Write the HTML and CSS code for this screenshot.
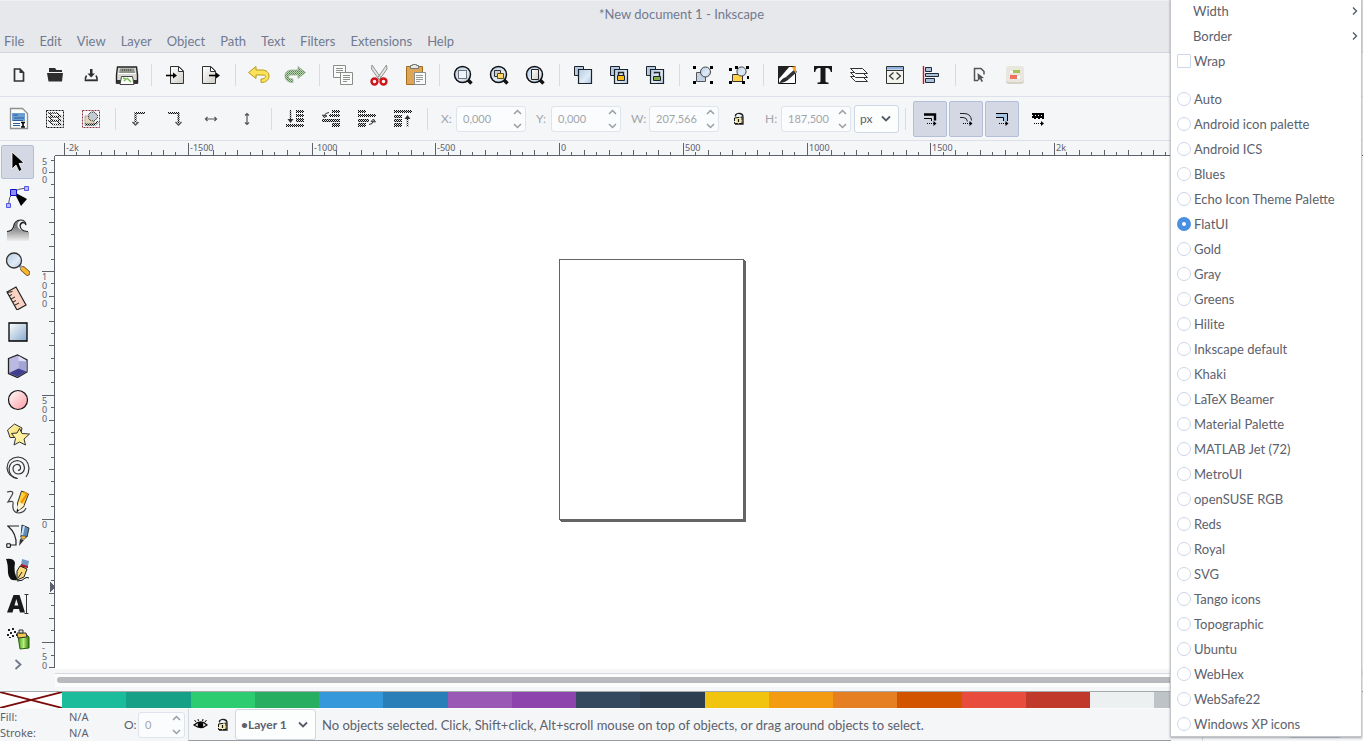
FILE: index.html
```html
<!DOCTYPE html>
<html lang="en">
<head>
<meta charset="utf-8">
<title>*New document 1 - Inkscape</title>
<link rel="stylesheet" href="styles.css">
</head>
<body>
<svg class="defs" aria-hidden="true">
  <defs>
    <pattern id="dk" width="2" height="2" patternUnits="userSpaceOnUse"><rect width="1" height="1" fill="#111"/><rect x="1" y="1" width="1" height="1" fill="#111"/><rect x="1" width="1" height="1" fill="#aaa"/></pattern>
    <pattern id="gr" width="2" height="2" patternUnits="userSpaceOnUse"><rect width="2" height="2" fill="#c3d6bc"/><rect width="1" height="1" fill="#4d7a45"/><rect x="1" y="1" width="1" height="1" fill="#6d9963"/></pattern>
    <linearGradient id="blue" x1="0" y1="0" x2="1" y2="1"><stop offset="0" stop-color="#fff"/><stop offset="1" stop-color="#86a9cc"/></linearGradient>
    <linearGradient id="sky" x1="0" y1="0" x2="1" y2="1"><stop offset="0" stop-color="#b4cbe4"/><stop offset=".6" stop-color="#e0ebf6"/><stop offset="1" stop-color="#a9c3de"/></linearGradient>
    <linearGradient id="pink" x1="0" y1="0" x2="1" y2="1"><stop offset="0" stop-color="#fff"/><stop offset="1" stop-color="#ff9aa2"/></linearGradient>
    <linearGradient id="gold" x1="0" y1="0" x2="1" y2="1"><stop offset="0" stop-color="#fff6c4"/><stop offset="1" stop-color="#f7d34a"/></linearGradient>
    <linearGradient id="paper" x1="0" y1="0" x2="1" y2="1"><stop offset="0" stop-color="#fff"/><stop offset="1" stop-color="#cfcdc6"/></linearGradient>
    <linearGradient id="grey" x1="0" y1="0" x2="0" y2="1"><stop offset=".3" stop-color="#777"/><stop offset="1" stop-color="#eee"/></linearGradient>
    <linearGradient id="green" x1="0" y1="0" x2="1" y2="0"><stop offset="0" stop-color="#3f9a12"/><stop offset=".5" stop-color="#b9ee7e"/><stop offset="1" stop-color="#2f7a0c"/></linearGradient>
    <g id="lens"><circle cx="11.500" cy="11.500" r="8" fill="url(#sky)" stroke="#111" stroke-width="1.500"/><path d="M17 17l3.500 3.500" stroke="#111" stroke-width="3.400"/></g>
    <g id="twosq" stroke="#1b222b"><path d="M3.500 3.500h9v9h-9z" fill="#b5cae0"/><path d="M7.500 6.500h13v14h-13z" fill="url(#sky)" stroke-width="1.200"/></g>
    <g id="corners" fill="#000"><path d="M2 3h3v3H2zM19 3h3v3h-3zM2 18h3v3H2zM19 18h3v3h-3z"/></g>
    <g id="up" fill="none" stroke="#9a9da3" stroke-width="1.500"><path d="M1 5l3.500-3.500L8 5M1 15l3.500 3.500L8 15"/></g>
    <path id="down" d="M1 1.500l4 4 4-4" fill="none" stroke="#555c69" stroke-width="1.800"/>
    <g id="lock"><path d="M8.500 9.500V8Q10 6 13 6.500t3 3.500v7h-8" fill="none" stroke="#222" stroke-width="1.300"/><path d="M7.500 11l7.500-1v6.500H7.500z" fill="#f7ecb0" stroke="#111" stroke-dasharray="5 1"/><path d="M11.500 12v3" stroke="#111" stroke-width="1.200"/></g>
  </defs>
</svg>

<header>
  <h1>*New document 1 - Inkscape</h1>
  <nav class="menubar">
    <button>File</button><button>Edit</button><button>View</button><button>Layer</button><button>Object</button><button>Path</button><button>Text</button><button>Filters</button><button>Extensions</button><button>Help</button>
  </nav>
</header>

<div class="toolbar">
  <button class="tb" aria-label="New"><svg viewBox="0 0 24 24"><path d="M7.500 6h5.500l3.500 3.500V18h-9z" fill="none" stroke="#333" stroke-width="1.700"/><path d="M12.500 5.500v4.500H17" fill="#333"/></svg></button>
  <button class="tb" aria-label="Open"><svg viewBox="0 0 24 24"><path d="M6 5h6l1.500 2H19v2H6zM4 10h16l-1 8.500H5.500z" fill="#2e2e2e"/></svg></button>
  <button class="tb" aria-label="Save"><svg viewBox="0 0 24 24"><path d="M11 6h2.500v4.500H16L12.200 14.500 8.500 10.500H11z" fill="#2e2e2e"/><path d="M7.500 12.500l-1 2.500v2.500h11.500V15l-1-2.500" fill="none" stroke="#2e2e2e" stroke-width="1.600"/><path d="M8 16.500h9" stroke="#777"/></svg></button>
  <button class="tb" aria-label="Print"><svg viewBox="0 0 24 24"><path d="M2.500 4h19l1 8v8h-21v-8z" fill="#d9dad2" stroke="#222" stroke-width="1.400"/><path d="M5 5.500h14l1 4.500H4z" fill="#8f958c"/><path d="M7 7h10" stroke="#333" stroke-dasharray="1 1"/><path d="M3 10.500h18" stroke="#fff"/><path d="M2 17h20v4H2z" fill="#333"/><path d="M6.500 13.500h11l1.500 8h-14z" fill="#fff" stroke="#444"/><path d="M8 15l3 1-2 2M12 15l4 4" stroke="#6cbf4a" stroke-width="1.500" fill="none"/></svg></button>
  <i class="sep"></i>
  <button class="tb" aria-label="Import"><svg viewBox="0 0 24 24"><path d="M7.500 3.500h8.500l4.500 4.500v12.500h-13z" fill="url(#paper)" stroke="#333"/><path d="M15.500 3.500V8.500h5z" fill="#fff" stroke="#333"/><path d="M3 12.500h8" stroke="#000" stroke-width="1.600"/><path d="M10 9.500l4 3-4 3z"/></svg></button>
  <button class="tb" aria-label="Export"><svg viewBox="0 0 24 24"><path d="M3.500 3.500h8.500l4.500 4.500v12.500h-13z" fill="url(#paper)" stroke="#333"/><path d="M11.500 3.500V8.500h5z" fill="#fff" stroke="#333"/><path d="M10 12.500h8" stroke="#000" stroke-width="1.600"/><path d="M17 9.500l4 3-4 3z"/></svg></button>
  <i class="sep"></i>
  <button class="tb" aria-label="Undo"><svg viewBox="0 0 24 24"><path d="M1.500 9.500L9 3.500v3.500h6c4 0 7 2 7 6 0 4-3 6.500-8 6.500v-3.500c3 0 4.500-1 4.500-2.500S17 12 14 12H9v3.500z" fill="#fbe25c" stroke="#b89a10"/></svg></button>
  <button class="tb" aria-label="Redo"><svg viewBox="0 0 24 24"><path d="M22.500 9.500L15 3.500v3.500H9c-4 0-7 2-7 6 0 4 3 6.500 8 6.500v-3.500c-3 0-4.500-1-4.500-2.500S7 12 10 12h5v3.500z" fill="url(#gr)" stroke="#93ab8d" stroke-width=".7"/></svg></button>
  <i class="sep"></i>
  <button class="tb" aria-label="Copy"><svg viewBox="0 0 24 24"><g fill="#fafafa" stroke="#8b8d89"><path d="M2.500 2.500h12v12h-12z"/><path d="M9.500 9.500h12v12h-12z"/></g><path d="M5 5.500h7M5 7.500h7M5 9.500h6M12 12.500h7M12 14.500h7M12 16.500h7M12 18.500h4" stroke="#8d8f8c"/></svg></button>
  <button class="tb" aria-label="Cut"><svg viewBox="0 0 24 24"><path d="M5 2l9 13-2 1.500L4.500 6zM19.500 2l-9 13 2 1.500L20 6z" fill="#e4e6e2" stroke="#858883" stroke-width=".9"/><circle cx="7.500" cy="18.500" r="3" fill="none" stroke="#d0151a" stroke-width="2.400"/><circle cx="16.500" cy="18.500" r="3" fill="none" stroke="#d0151a" stroke-width="2.400"/></svg></button>
  <button class="tb" aria-label="Paste"><svg viewBox="0 0 24 24"><path d="M3.500 3.500h16v18h-16z" fill="#dda555" stroke="#a36c1d"/><path d="M7.500 5.500v-3h2v-1h4v1h2v3z" fill="#e8e8e4" stroke="#777"/><path d="M11.500 9.500h11v12h-11z" fill="#fafafa" stroke="#8b8d89"/><path d="M13 12.500h7M13 14.500h7M13 16.500h7M13 18.500h4" stroke="#999"/></svg></button>
  <i class="sep"></i>
  <button class="tb" aria-label="Zoom selection"><svg viewBox="0 0 24 24"><use href="#lens"/><path d="M7.500 7.500h8v8h-8z" fill="#fff" fill-opacity=".6" stroke="#000" stroke-dasharray="1 1"/></svg></button>
  <button class="tb" aria-label="Zoom drawing"><svg viewBox="0 0 24 24"><use href="#lens"/><path d="M7.500 7.500h6v6h-6z" fill="#ccc" stroke="#333"/><path d="M10.500 10.500h6v5h-6z" fill="#ffdb70" stroke="#6b4a00"/></svg></button>
  <button class="tb" aria-label="Zoom page"><svg viewBox="0 0 24 24"><use href="#lens"/><path d="M8.500 6.500h7v10h-7z" fill="url(#paper)" stroke="#222"/></svg></button>
  <i class="sep"></i>
  <button class="tb" aria-label="Duplicate"><svg viewBox="0 0 24 24"><use href="#twosq"/></svg></button>
  <button class="tb" aria-label="Clone"><svg viewBox="0 0 24 24"><use href="#twosq"/><path d="M11.500 12v-2.500h5V12" fill="none" stroke="#222" stroke-width="1.400"/><path d="M10.500 12.500h7v5h-7z" fill="#fbb917" stroke="#222"/></svg></button>
  <button class="tb" aria-label="Unlink clone"><svg viewBox="0 0 24 24"><use href="#twosq"/><path d="M11.500 10.500v-1h5V13" fill="none" stroke="#222" stroke-width="1.400"/><path d="M10.500 13.500h7v4h-7z" fill="#7fae4b" stroke="#222"/></svg></button>
  <i class="sep"></i>
  <button class="tb" aria-label="Group"><svg viewBox="0 0 24 24"><path d="M5.500 9.500h9v9h-9z" fill="#c2d3e5" stroke="#555"/><circle cx="14.500" cy="9" r="5" fill="url(#sky)" stroke="#444"/><use href="#corners"/></svg></button>
  <button class="tb" aria-label="Ungroup"><svg viewBox="0 0 24 24"><path d="M5.500 11.500h10v7h-10z" fill="#ffd24a" stroke="#333"/><circle cx="14.500" cy="8.500" r="4.600" fill="url(#sky)" stroke="#444"/><path d="M2 5h3v3H2zM8 3h3v3H8zM19 3h3v3h-3zM2 18h3v3H2zM15 18h3v3h-3zM20 13h2v3h-2z"/></svg></button>
  <i class="sep"></i>
  <button class="tb" aria-label="Fill and stroke"><svg viewBox="0 0 24 24"><path d="M3.500 3.500h17v17h-17z" fill="#fff" stroke="#111"/><path d="M3 3h12L3 17z" fill="#222"/><path d="M20 6l2 3-8 7-3-2z" fill="#30343a"/><path d="M17 4l4-1v8z" fill="#f5a623"/><path d="M4 20q4-6 8-6l2 2q-4 4-10 4z" fill="#2a2a2a"/></svg></button>
  <button class="tb" aria-label="Text"><svg viewBox="0 0 24 24"><path d="M3 3h18v6h-1.200q-.8-4-3.800-4h-1.500v13q0 1.500 3 1.500V21H6.500v-1.500q3 0 3-1.500V5H8Q5 5 4.200 9H3z" fill="#181818"/></svg></button>
  <button class="tb" aria-label="Layers"><svg viewBox="0 0 24 24"><g fill="#fafafa" stroke="#333"><path d="M3.500 13.500h12l5 5h-12z"/><path d="M3.500 9.500h12l5 5h-12z"/><path d="M3.500 5.500h12l5 5h-12z"/></g></svg></button>
  <button class="tb" aria-label="XML editor"><svg viewBox="0 0 24 24"><path d="M3.500 3.500h17v17h-17z" fill="#f3f3ee" stroke="#333"/><path d="M4 4h16v2.500H4z" fill="#8fb4e3"/><path d="M4 7.500h16" stroke="#333"/><path d="M10.500 9.500L6.500 13l4 3.500M13.500 9.500l4 3.500-4 3.500" fill="none" stroke="#333" stroke-width="1.200"/></svg></button>
  <button class="tb" aria-label="Align"><svg viewBox="0 0 24 24"><path d="M4.500 3v18" stroke="#d0101a" stroke-width="1.400"/><g fill="#a9c3dc" stroke="#1f2a36"><path d="M6.500 4.500h6v4h-6zM6.500 10.500h13v3h-13zM6.500 15.500h9v4h-9z"/></g></svg></button>
  <i class="sep"></i>
  <button class="tb" aria-label="Preferences"><svg viewBox="0 0 24 24"><path d="M11 17.500H7.500V5.500h6.500l3 3v3" fill="none" stroke="#555" stroke-width="1.500"/><path d="M10.500 10l6.500 5-2.500.3 1.500 3-1.500.7-1.500-3-2 2z" fill="#555"/></svg></button>
  <button class="tb" aria-label="Document properties"><svg viewBox="0 0 24 24"><rect x="3" y="4" width="18" height="17" rx="3" fill="#d5d3c8"/><rect x="3" y="3" width="18" height="16" rx="3" fill="#e9e7dd"/><path d="M10 7h7v3h-7z" fill="#a3c556"/><path d="M7 12h7v4H7z" fill="#ed7465"/><path d="M7 8h3v2H7zM14 13h3v3h-3z" fill="#fff"/></svg></button>
</div>

<div class="toolbar options">
  <button class="tb" aria-label="Select all"><svg viewBox="0 0 24 24"><path d="M3.500 1.500h12l5 5v15h-17z" fill="#fbfbf8" stroke="#8d9290" stroke-width="1.300"/><path d="M5 6h13v8H5z" fill="#6c9fd4"/><path d="M6 8h5M7 11h10M6 13.500h10M6 16.500h7M6 18.500h7" stroke="#2c5d95"/><path d="M13 15h6v6h-6z" fill="#fff"/><path d="M14 15.500h4M14 20h4M16 16v4" stroke="#000" stroke-width="1.600"/></svg></button>
  <button class="tb" aria-label="Select all layers"><svg viewBox="0 0 24 24"><path d="M3.500 3.500h17v17h-17z" fill="none" stroke="#111" stroke-dasharray="2 1"/><g fill="#fff" stroke="url(#dk)" stroke-width="1.500"><path d="M6 14h8l4 3.500h-8zM6 10h8l4 3.500h-8zM6 6h8l4 3.500h-8z"/></g></svg></button>
  <button class="tb" aria-label="Deselect"><svg viewBox="0 0 24 24"><path d="M3.500 3.500h17v17h-17z" fill="none" stroke="#8c3540" stroke-dasharray="2 1"/><path d="M6 9h9v9H6z" fill="#e3d9ba" stroke="#aaa"/><circle cx="14" cy="9.500" r="4.500" fill="#c3cad3" stroke="url(#dk)"/><path d="M6 17.500h10l3-3" stroke="url(#dk)" fill="none" stroke-width="2"/></svg></button>
  <i class="sep"></i>
  <button class="tb" aria-label="Rotate left"><svg viewBox="0 0 24 24"><path d="M18 6H8.500v10" fill="none" stroke="url(#dk)" stroke-width="2"/><path d="M5.500 15l3 3 3-3" fill="none" stroke="#555" stroke-width="1.500"/></svg></button>
  <button class="tb" aria-label="Rotate right"><svg viewBox="0 0 24 24"><path d="M5 6h10.500v10" fill="none" stroke="url(#dk)" stroke-width="2"/><path d="M12.500 15l3 3 3-3" fill="none" stroke="#555" stroke-width="1.500"/></svg></button>
  <button class="tb" aria-label="Flip horizontal"><svg viewBox="0 0 24 24"><path d="M7 12h10M8.500 10l-2 2 2 2M15.500 10l2 2-2 2" fill="none" stroke="#555" stroke-width="1.200"/></svg></button>
  <button class="tb" aria-label="Flip vertical"><svg viewBox="0 0 24 24"><path d="M12 7v10M10 8.500l2-2 2 2M10 15.500l2 2 2-2" fill="none" stroke="#555" stroke-width="1.200"/></svg></button>
  <i class="sep"></i>
  <button class="tb" aria-label="Lower to bottom"><svg viewBox="0 0 24 24"><path d="M7.500 3v11" stroke="url(#dk)" stroke-width="1.500"/><path d="M4.500 12h6l-3 4z" fill="#333"/><path d="M13 3h8v3h-8zM13 7h8v3h-8zM13 11h8v4h-8zM3 17h18v3H3z" fill="url(#dk)"/></svg></button>
  <button class="tb" aria-label="Lower"><svg viewBox="0 0 24 24"><path d="M13 3h8v3h-8zM10 7h11v3H10zM3 12h18v3H3zM13 16h8v4h-8z" fill="url(#dk)"/><path d="M10 5.500q-4 0-5 4M3.500 8l1.500 2.500 3-1.500z" fill="none" stroke="#333"/></svg></button>
  <button class="tb" aria-label="Raise"><svg viewBox="0 0 24 24"><path d="M3 3h8v3H3zM3 7h18v3H3zM3 12h11v3H3zM3 16h8v4H3z" fill="url(#dk)"/><path d="M14 17.500q4 0 4.500-4M16 14.500l2.500-2.500 2 3z" fill="none" stroke="#333"/></svg></button>
  <button class="tb" aria-label="Raise to top"><svg viewBox="0 0 24 24"><path d="M3 3h18v3H3zM3 8h8v3H3zM3 12h8v3H3zM3 16h8v4H3z" fill="url(#dk)"/><path d="M16.500 20V10" stroke="url(#dk)" stroke-width="1.500"/><path d="M13.500 12h6l-3-4z" fill="#333"/></svg></button>
  <i class="sep"></i>
  <div class="fields">
    <label for="fx">X:</label><span class="spin"><input id="fx" value="0,000" disabled><svg viewBox="0 0 9 20"><use href="#up"/></svg></span>
    <label for="fy">Y:</label><span class="spin"><input id="fy" value="0,000" disabled><svg viewBox="0 0 9 20"><use href="#up"/></svg></span>
    <label for="fw">W:</label><span class="spin"><input id="fw" value="207,566" disabled><svg viewBox="0 0 9 20"><use href="#up"/></svg></span>
    <button class="tb ratio" aria-label="Lock ratio"><svg viewBox="0 0 24 24"><use href="#lock"/></svg></button>
    <label for="fh">H:</label><span class="spin"><input id="fh" value="187,500" disabled><svg viewBox="0 0 9 20"><use href="#up"/></svg></span>
    <span class="pick unit"><select aria-label="Unit"><option>px</option></select><svg viewBox="0 0 10 7"><use href="#down"/></svg></span>
  </div>
  <i class="sep"></i>
  <div class="toggles">
    <button class="on" aria-label="Scale stroke width"><svg viewBox="0 0 24 24"><path d="M6 7.500h11v6" fill="none" stroke="#000" stroke-width="2.400"/><path d="M6 11.500h7.500V14" fill="none" stroke="#000"/><path d="M9 16.500h7" stroke="#000" stroke-dasharray="1 1"/><path d="M15.500 14l3 2.500-3 2.500z"/></svg></button>
    <button class="on" aria-label="Scale corners"><svg viewBox="0 0 24 24"><path d="M6 6.500h4q7 0 7.500 7M6 10.500h3q4 0 4.500 4" fill="none" stroke="#222"/><path d="M9 16.500h7" stroke="#000" stroke-dasharray="1 1"/><path d="M15.500 14l3 2.500-3 2.500z"/></svg></button>
    <button class="on" aria-label="Move gradients"><svg viewBox="0 0 24 24"><path d="M6 6.500h11.500V14h-4v-3.500H6z" fill="#a9c6e2"/><path d="M6 6.500h11.500V14M6 10.500h7.500V14" fill="none" stroke="#000"/><path d="M9 16.500h7" stroke="#000" stroke-dasharray="1 1"/><path d="M15.500 14l3 2.500-3 2.500z"/></svg></button>
    <button aria-label="Move patterns"><svg viewBox="0 0 24 24"><path d="M6 6h12v6H6z"/><path d="M6 8.500h12" stroke="#fff" stroke-dasharray="1 2"/><path d="M6 11.500h12" stroke="#f5f6f8" stroke-dasharray="2 2"/><path d="M8 16.500h8" stroke="#000" stroke-dasharray="1 1"/><path d="M15 14l3 2.500-3 2.500z"/></svg></button>
  </div>
</div>

<main>
  <aside class="tools">
    <button class="on" aria-label="Selector"><svg viewBox="0 0 24 24"><path d="M6 2l12 11-5 .5 3 6.500-3 1.500-3-6.500L6 19z" stroke="#fff" stroke-width=".8"/></svg></button>
    <button aria-label="Node editor"><svg viewBox="0 0 24 24"><path d="M2.500 20Q3 5 20 4" fill="none" stroke="#555"/><path d="M8 8l13 7-6 7z"/><g fill="#b9b9ff" stroke="#5454e8"><path d="M.5 19.500h4v4h-4zM18.500 2.500h4v4h-4z"/><path d="M4.500 5.500h6v6h-6z" stroke="#1010c0" fill="#8d8df5"/></g></svg></button>
    <button aria-label="Tweak"><svg viewBox="0 0 24 24"><path d="M1 14q5 1 7-4 1-8 7-8-4 2-3.500 6 1 5 11.500 6v9H1z" fill="url(#grey)"/><path d="M1 13.500q5 0 6.500-4.500 1-7 7-7 5 0 5.500 5-1-3-4-2-3 2-1 5.500 2 3 7 3M14 8q0-4 4-4" fill="none" stroke="#222" stroke-width="1.200"/></svg></button>
    <button aria-label="Zoom"><svg viewBox="0 0 24 24"><path d="M17 17l4.500 4" stroke="#6b4a10" stroke-width="5.500" stroke-linecap="round"/><path d="M13 13l4 4" stroke="#999" stroke-width="3"/><path d="M17 17l4.500 4" stroke="#f7b733" stroke-width="3.800" stroke-linecap="round"/><circle cx="8" cy="8.500" r="7.500" fill="url(#sky)" stroke="#333" stroke-width="1.300"/></svg></button>
    <button aria-label="Measure"><svg viewBox="0 0 24 24"><path d="M1 6l9-5 10 18-9 5z" fill="#f9d2c3" stroke="#222" stroke-width="1.200"/><path d="M1.500 6.500l5-1M3 10l3-1.500M5 13l4-2M7 16l3-1.500M9 19l4-2" stroke="#222"/></svg></button>
    <button aria-label="Rectangle"><svg viewBox="0 0 24 24"><path d="M3 3h18v18H3z" fill="url(#blue)" stroke="#000" stroke-width="1.300"/></svg></button>
    <button aria-label="3D box"><svg viewBox="0 0 24 24"><path d="M2.500 4.500l9-3.500 9.500 5v12l-9.500 5.500-9-4z" fill="#b9b9e2" stroke="#222" stroke-width="1.300"/><path d="M12.500 1.800l7.800 4.700v11l-7.800-3z" fill="#dcdcf4"/><path d="M12.500 7v7.500l7.800 3v-10z" fill="#a3a3d6"/><path d="M3 19l9.500-4.500 8 3-9 5.300z" fill="#40408f"/></svg></button>
    <button aria-label="Ellipse"><svg viewBox="0 0 24 24"><circle cx="12" cy="12" r="9.500" fill="url(#pink)" stroke="#111" stroke-width="1.200"/></svg></button>
    <button aria-label="Star"><svg viewBox="0 0 24 24"><path d="M1.500 8l7-6 7.500 4-2 9.500H4z" fill="url(#gold)" stroke="#333"/><path d="M13.500 6.500l2.500 5 7.500.5-5.500 5 1.500 6-6-3-5.500 3 1.500-6.500-4-5 5.500-.5z" fill="#fff0a0" stroke="#333"/></svg></button>
    <button aria-label="Spiral"><svg viewBox="0 0 24 24"><path d="M12 14.500q3-.5 2.500-3.500-1-3-4-2.500Q7 9.500 7 13q.5 4.500 5 5 6 0 6.500-6-.5-6.500-7-7.500Q4 5 3 12.500q0 8 8.500 10" fill="none" stroke="#333" stroke-width="1.200"/><path d="M11.500 22.500Q2 21 1 12 1.500 2 12 1q10 1 11 11 0 5-3 9" fill="none" stroke="#333" stroke-width="1.200"/></svg></button>
    <button aria-label="Pencil"><svg viewBox="0 0 24 24"><path d="M1 2q8-2 5 3l-4 7q6-2 5 2-1 8 5 9 6 0 8-5" fill="none" stroke="#444" stroke-width="1.200"/><path d="M15.500 1l7 3-5 13-6 4v-8z" fill="#ffd23c" stroke="#333"/><path d="M13.500 11l4.500 4-6 6-1-4z" fill="#fff4d0"/><path d="M18 2l3 2-6 9" stroke="#f08c00" stroke-width="2" fill="none"/><path d="M11 19l2 1.500-2.500 2z"/></svg></button>
    <button aria-label="Bezier"><svg viewBox="0 0 24 24"><path d="M1 2h12M2 2q9 8 8 19H4" fill="none" stroke="#222" stroke-width="1.200"/><path d="M.8 19.800h3.500v3.500H.8z" fill="#fff" stroke="#000"/><path d="M16 1l7 3-2 9h-6z" fill="#5b8db8" stroke="#333"/><path d="M18 2l-2 9" stroke="#c9e0f5" stroke-width="2"/><path d="M15 12h5l-1 3h-4z" fill="#f0c040" stroke="#333" stroke-width=".6"/><path d="M14 15l4 1-5 6z" fill="#333"/></svg></button>
    <button aria-label="Calligraphy"><svg viewBox="0 0 24 24"><path d="M0 1q8-1 9 4-2 9 3 17-9 2-10-7Q2 5 0 1z" fill="#111"/><path d="M11 23q6 0 8-3 2-1 4 0" fill="none" stroke="#111"/><path d="M16 1l7 2-1 5h-7z" fill="#7099c4"/><path d="M15 6l7 2v2l-8-1z" fill="#b3151d"/><path d="M14 8l7 3-3 8-7 3V13z" fill="#fad978" stroke="#222"/><path d="M12 20l4-6" stroke="#222"/></svg></button>
    <button aria-label="Text"><svg viewBox="0 0 24 24"><path d="M7.500 3h6L19 20.500h-5l-1-3.500H7.500l-1 3.500h-5.500zM10.300 7L8.500 13.500h3.800z" fill="#1a1a1a" fill-rule="evenodd"/><path d="M18.500 2.500h4M18.500 21.500h4M20.500 3v18" stroke="#333"/></svg></button>
    <button aria-label="Spray"><svg viewBox="0 0 24 24"><path d="M12 10l8-2 3 3v11l-9 1z" fill="url(#green)" stroke="#286008"/><path d="M11 7h9l1 4-9 1z" fill="#f0c850" stroke="#333"/><path d="M13 4h4v3h-4z" fill="#ddd" stroke="#333"/><path d="M2 3h2v2H2zM6 2h2v2H6zM4 6h2v2H4zM1 8h2v2H1zM8 5h2v2H8zM6 9h2v2H6zM10 8h1v2h-1zM3 11h2v1H3z" fill="#222"/></svg></button>
    <button class="more" aria-label="More tools"><svg viewBox="0 0 24 24"><path d="M9.500 8l5 4.500-5 4.500" fill="none" stroke="#70778a" stroke-width="1.800"/></svg></button>
  </aside>
  <svg class="vruler" id="vruler" aria-hidden="true"></svg>
  <div class="work">
    <svg class="hruler" id="hruler" aria-hidden="true"></svg>
    <div class="canvas"><div class="page"></div></div>
    <div class="scroll"><div class="thumb"></div></div>
  </div>
</main>

<div class="palette">
  <svg class="none" viewBox="0 0 62 16" preserveAspectRatio="none"><path d="M0 0l62 16M62 0L0 16" stroke="#7c0a0a" stroke-width="1.700"/></svg>
  <i class="c1"></i><i class="c2"></i><i class="c3"></i><i class="c4"></i><i class="c5"></i><i class="c6"></i><i class="c7"></i><i class="c8"></i><i class="c9"></i><i class="c10"></i><i class="c11"></i><i class="c12"></i><i class="c13"></i><i class="c14"></i><i class="c15"></i><i class="c16"></i><i class="c17"></i><i class="c18"></i><i class="c19"></i><i class="c20"></i>
</div>

<footer>
  <div class="style"><span>Fill:</span><span>N/A</span><span>Stroke:</span><span>N/A</span></div>
  <label for="op">O:</label><span class="spin small"><input id="op" value="0" disabled><svg viewBox="0 0 9 20"><use href="#up"/></svg></span>
  <div class="state">
    <button class="mini" aria-label="Layer visibility"><svg viewBox="0 0 24 24"><path d="M5 12q7-6 13 0-6 5-13 0z" fill="#fff" stroke="#111" stroke-width="1.300"/><circle cx="11.500" cy="12" r="2.800"/><path d="M7 9L5.500 7M9.500 8L9 6M13.500 8l.5-2M16 9l1.500-2" stroke="#111"/></svg></button>
    <button class="mini" aria-label="Layer lock"><svg viewBox="0 0 24 24"><use href="#lock"/></svg></button>
    <span class="pick layer"><select aria-label="Layer"><option>•Layer 1</option></select><svg viewBox="0 0 10 7"><use href="#down"/></svg></span>
    <p>No objects selected. Click, Shift+click, Alt+scroll mouse on top of objects, or drag around objects to select.</p>
  </div>
  <div class="coords"><span class="pick"></span></div>
</footer>

<form class="popup">
  <button type="button">Width<svg viewBox="0 0 6 8"><path d="M1 .5L4.500 4 1 7.500" fill="none" stroke="#555c69" stroke-width="1.400"/></svg></button>
  <button type="button">Border<svg viewBox="0 0 6 8"><path d="M1 .5L4.500 4 1 7.500" fill="none" stroke="#555c69" stroke-width="1.400"/></svg></button>
  <label><input type="checkbox">Wrap</label>
  <hr>
  <label><input type="radio" name="p">Auto</label>
  <label><input type="radio" name="p">Android icon palette</label>
  <label><input type="radio" name="p">Android ICS</label>
  <label><input type="radio" name="p">Blues</label>
  <label><input type="radio" name="p">Echo Icon Theme Palette</label>
  <label><input type="radio" name="p" checked>FlatUI</label>
  <label><input type="radio" name="p">Gold</label>
  <label><input type="radio" name="p">Gray</label>
  <label><input type="radio" name="p">Greens</label>
  <label><input type="radio" name="p">Hilite</label>
  <label><input type="radio" name="p">Inkscape default</label>
  <label><input type="radio" name="p">Khaki</label>
  <label><input type="radio" name="p">LaTeX Beamer</label>
  <label><input type="radio" name="p">Material Palette</label>
  <label><input type="radio" name="p">MATLAB Jet (72)</label>
  <label><input type="radio" name="p">MetroUI</label>
  <label><input type="radio" name="p">openSUSE RGB</label>
  <label><input type="radio" name="p">Reds</label>
  <label><input type="radio" name="p">Royal</label>
  <label><input type="radio" name="p">SVG</label>
  <label><input type="radio" name="p">Tango icons</label>
  <label><input type="radio" name="p">Topographic</label>
  <label><input type="radio" name="p">Ubuntu</label>
  <label><input type="radio" name="p">WebHex</label>
  <label><input type="radio" name="p">WebSafe22</label>
  <label><input type="radio" name="p">Windows XP icons</label>
</form>
<script src="rulers.js"></script>
</body>
</html>
```
FILE: rulers.js
```js
// Draws both rulers: one major tick per 500 px of document space.
const NS = "http://www.w3.org/2000/svg";
const MAJOR = 123.75;

function add(parent, name, attrs, text) {
  const el = document.createElementNS(NS, name);
  for (const key in attrs) el.setAttribute(key, attrs[key]);
  if (text) el.textContent = text;
  parent.appendChild(el);
}

function tickLength(i, major) {
  if (i % 10 === 0) return major;
  return i % 2 === 0 ? 5 : 3;
}

const h = document.getElementById("hruler");
const width = h.clientWidth;
const originX = 504;
for (let i = -40; i < 70; i++) {
  const x = Math.round(originX + i * MAJOR / 10);
  if (x < 0 || x > width) continue;
  const len = tickLength(i, 12);
  add(h, "rect", { x, y: 14 - len, width: 1, height: len });
  if (i % 10 === 0) {
    const value = i * 50;
    const label = Math.abs(value) >= 2000 ? value / 1000 + "k" : String(value);
    add(h, "text", { x: x + 2, y: 10 }, label);
  }
}
add(h, "rect", { x: 0, y: 14, width: "100%", height: 1 });

const v = document.getElementById("vruler");
const height = v.clientHeight;
const originY = 378;
for (let i = -12; i < 31; i++) {
  const y = Math.floor(originY - i * MAJOR / 10);
  const len = tickLength(i, 12);
  if (y > 15 && y < height) add(v, "rect", { x: 12 - len, y, width: len, height: 1 });
  if (i % 10 === 0) {
    [...String(i * 50)].forEach((digit, n) => {
      const base = y + 9 + n * 9;
      if (base > 20 && base < height + 3) add(v, "text", { x: 0, y: base }, digit);
    });
  }
}
add(v, "rect", { x: 12, y: 15, width: 1, height: height - 15 });
add(v, "path", { d: "M8 441l5 5-5 5z" });
```
FILE: styles.css
```css
* { box-sizing: border-box; }
body {
  margin: 0;
  height: 100vh;
  display: flex;
  flex-direction: column;
  position: relative;
  overflow: hidden;
  background: #f5f6f8;
  color: #5c616c;
  font: 13px/16px Lato, "Noto Sans", sans-serif;
}
button, input, select { font: inherit; color: inherit; }
button { border: 0; background: none; padding: 0; }
svg { display: block; flex: none; }
.defs { position: absolute; width: 0; height: 0; }

header {
  background: #e7e8eb;
  color: #707a91;
  border-top: 1px solid #eff0f3;
  border-bottom: 1px solid #d3d6de;
}
h1 {
  margin: 0;
  font-size: 13px;
  font-weight: 400;
  line-height: 27px;
  text-align: center;
}
.menubar { display: flex; gap: 15px; padding: 2px 0 0 4px; height: 24px; }

.toolbar {
  display: flex;
  align-items: center;
  height: 44px;
  padding-left: 1px;
  border-bottom: 1px solid #dce0ea;
}
.tb { width: 36px; height: 36px; display: flex; align-items: center; justify-content: center; }
.tb svg { width: 24px; height: 24px; }
.sep { width: 12px; height: 22px; display: flex; justify-content: center; }
.sep::before { content: ""; width: 1px; background: #d9dbe1; }

.fields { display: flex; align-items: center; color: #a2a5ab; font-size: 12px; padding: 0 0 0 8px; }
.fields label { width: 15px; white-space: nowrap; }
.fields .spin + label { margin-left: 10px; }
.fields label[for="fw"] { width: 18px; }
.fields label[for="fh"] { margin-left: 8px; width: 16px; }
.fields .ratio { margin-left: 2px; }
.spin {
  display: flex;
  align-items: center;
  width: 70px;
  height: 26px;
  padding: 0 3px 0 6px;
  border: 1px solid #dfe3ec;
  border-radius: 3px;
  background: #fbfcfd;
}
.spin input { flex: 1; min-width: 0; padding: 0; border: 0; background: none; font-size: 11px; color: #a2a5ab; }
.spin svg { width: 9px; height: 20px; }
.pick {
  position: relative;
  display: flex;
  align-items: center;
  border: 1px solid #cfd6e6;
  border-radius: 3px;
  background: #fcfdfd;
  color: #5c616c;
}
.pick select { appearance: none; width: 100%; height: 100%; padding: 0 0 0 5px; border: 0; background: none; font-size: 12px; }
.pick svg { position: absolute; right: 7px; width: 10px; height: 7px; pointer-events: none; }
.unit { width: 45px; height: 28px; margin-left: 3px; }
.toggles { display: flex; gap: 2px; padding-left: 2px; }
.toggles button {
  width: 34px;
  height: 36px;
  display: flex;
  align-items: center;
  justify-content: center;
}
.toggles svg { width: 24px; height: 24px; }
.on { background: #d3d8e4; border: 1px solid #b3bfd9; border-radius: 2px; }

main { flex: 1; min-height: 0; display: flex; }
.tools { width: 42px; padding: 4px 0 0 1px; overflow: hidden; }
.tools button { width: 33px; height: 34px; display: flex; align-items: center; justify-content: center; }
.tools svg { width: 24px; height: 24px; }
.tools .more { height: 18px; }
.vruler { width: 13px; height: 527px; overflow: visible; }
.hruler { width: 100%; height: 15px; }
.hruler, .vruler { fill: #5c616c; font-family: "Noto Sans", sans-serif; font-size: 9px; shape-rendering: crispEdges; }
.work { flex: 1; min-width: 0; display: flex; flex-direction: column; }
.canvas { flex: 1; position: relative; background: #fff; }
.page {
  position: absolute;
  left: 504px;
  top: 103px;
  width: 185px;
  height: 261px;
  border: 1px solid #646464;
  box-shadow: 1px 1px #646464, 2px 2px #646464;
}
.scroll {
  margin: 4px 0;
  border-top: 1px solid #d5d9e2;
  background: #fcfcfd;
  padding: 3px 2px 4px;
}
.thumb { height: 6px; border-radius: 3px; background: #b8babf; }

.palette { display: flex; height: 17px; border-top: 1px solid #a4a9ae; padding-right: 16px; }
.palette i { flex: 1; }
.none { width: 62px; height: 16px; background: #fff; }
.c1 { background: #1abc9c; }
.c2 { background: #16a085; }
.c3 { background: #2ecc71; }
.c4 { background: #27ae60; }
.c5 { background: #3498db; }
.c6 { background: #2980b9; }
.c7 { background: #9b59b6; }
.c8 { background: #8e44ad; }
.c9 { background: #34495e; }
.c10 { background: #2c3e50; }
.c11 { background: #f1c40f; }
.c12 { background: #f39c12; }
.c13 { background: #e67e22; }
.c14 { background: #d35400; }
.c15 { background: #e74c3c; }
.c16 { background: #c0392b; }
.c17 { background: #ecf0f1; }
.c18 { background: #bdc3c7; }
.c19 { background: #95a5a6; }
.c20 { background: #7f8c8d; }

footer { display: flex; align-items: center; height: 33px; border-top: 1px solid #fcfcfd; }
.style { display: grid; grid-template-columns: 69px 55px; font-family: "Noto Sans", sans-serif; font-size: 11px; }
footer > label { width: 14px; font-size: 12px; }
.small { width: 47px; }
.state {
  flex: 1;
  display: flex;
  align-items: center;
  height: 100%;
  margin-left: 3px;
  border-left: 1px solid #d5d8df;
  border-bottom: 1px solid #9a9ca0;
}
.mini { width: 22px; height: 24px; }
.mini svg { width: 24px; height: 24px; }
.layer { width: 81px; height: 31px; margin-left: 2px; }
.layer select { font-weight: 700; }
.state p { margin: 0 0 0 6px; white-space: nowrap; }
.coords {
  width: 161px;
  height: 100%;
  margin-left: 31px;
  padding: 3px 21px 3px 85px;
  border-left: 1px solid #d5d8df;
}
.coords .pick { height: 100%; }

.popup {
  position: absolute;
  top: -2px;
  right: 1px;
  width: 192px;
  background: #fff;
  border: 1px solid #c4c6ca;
  border-top: 0;
  box-shadow: 0 1px 2px #0005;
}
.popup button, .popup label { display: flex; align-items: center; width: 100%; height: 25px; padding: 0 5px; }
.popup button { padding-left: 22px; justify-content: space-between; padding-right: 3px; }
.popup button svg { width: 6px; height: 8px; }
.popup hr { height: 13px; margin: 0; border: 0; }
.popup input {
  appearance: none;
  flex: none;
  width: 14px;
  height: 14px;
  margin: 0 3px 0 1px;
  border: 1px solid #cdd6ea;
  border-radius: 7px;
  background: #fff;
}
.popup input[type="checkbox"] { border-radius: 1px; }
.popup input:checked { border: 5px solid #4a90e2; }
```
